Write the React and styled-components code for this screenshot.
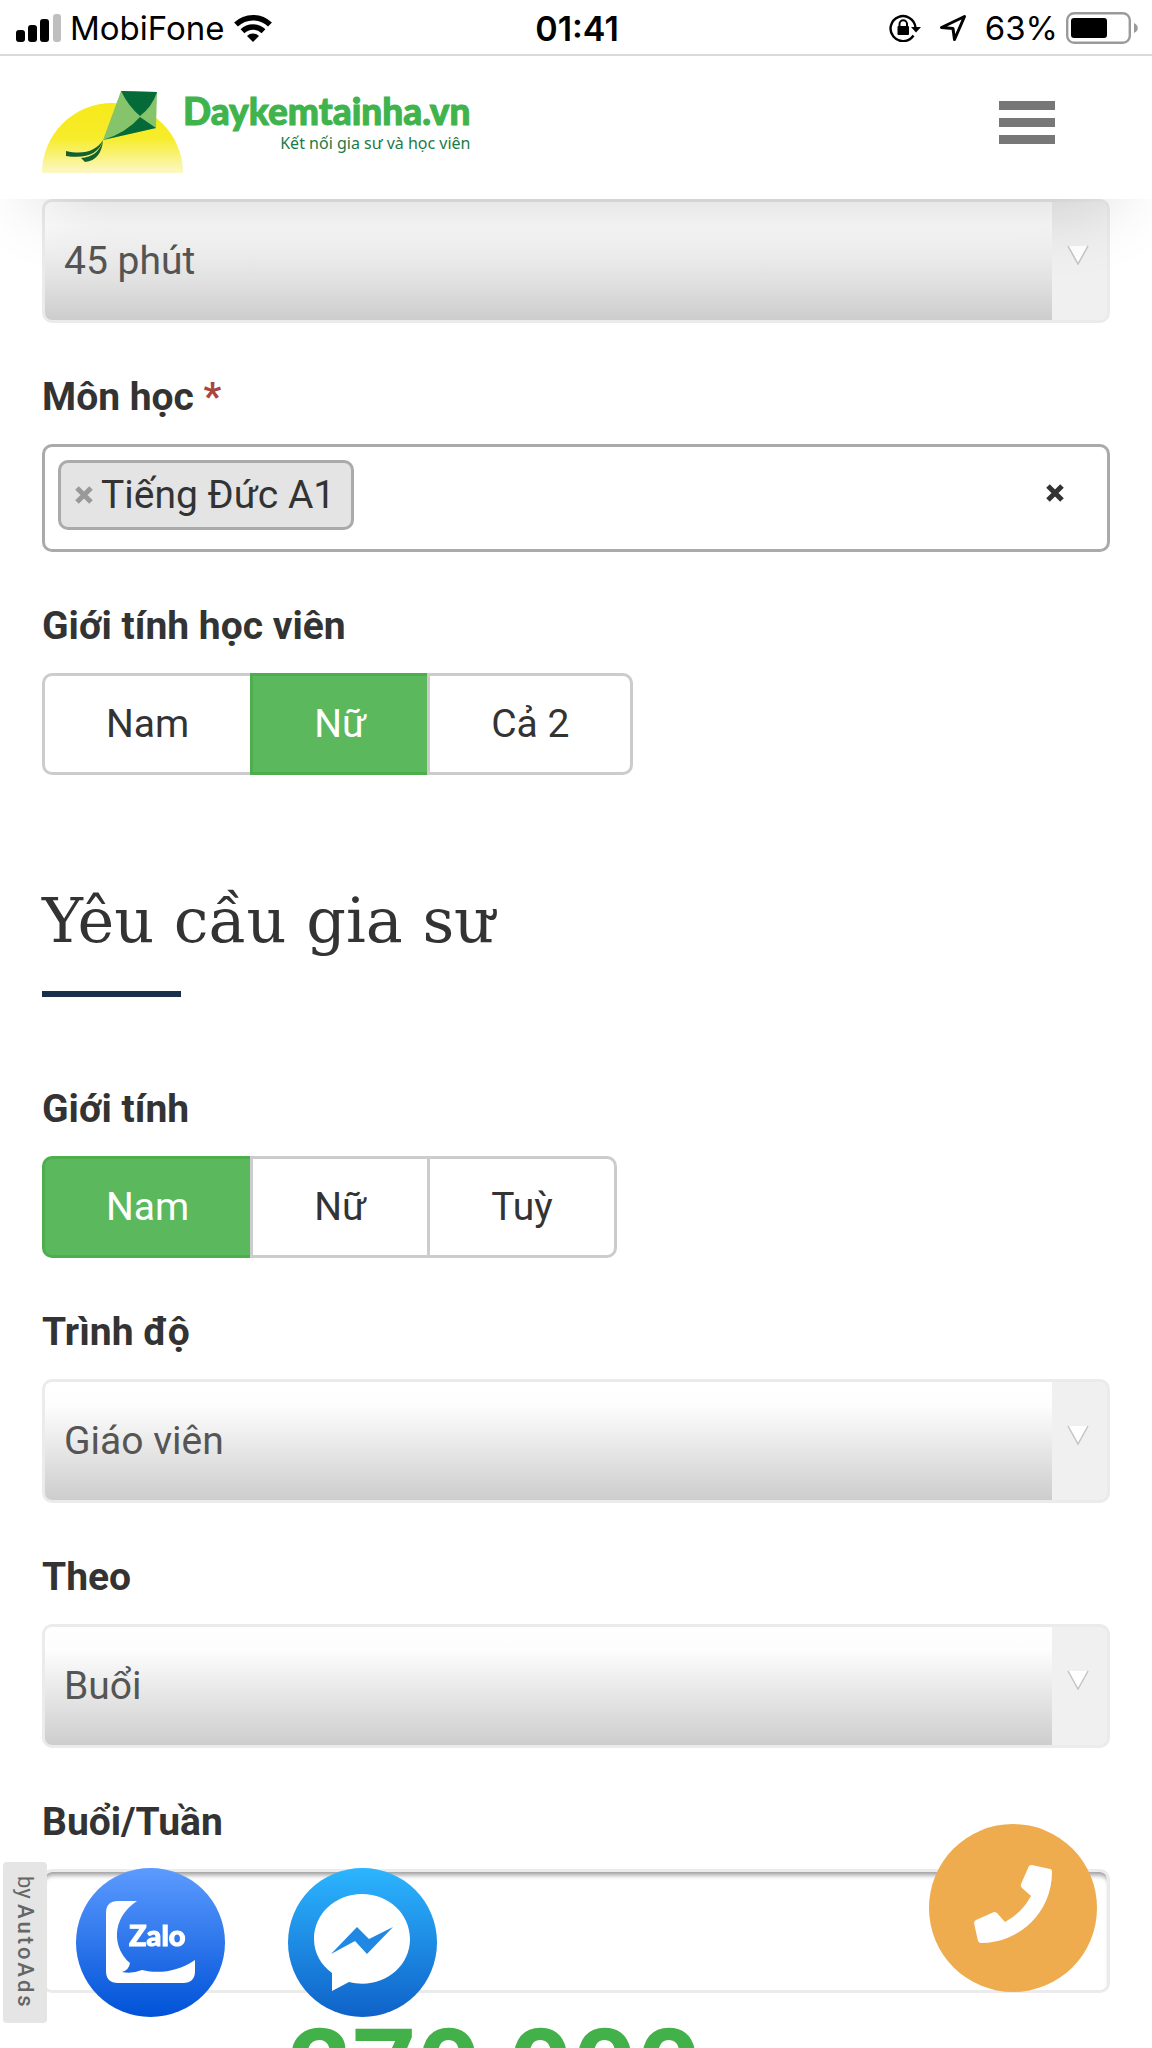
import React, { useState } from 'react';
import styled, { createGlobalStyle, css } from 'styled-components';

const GlobalStyle = createGlobalStyle`
	* {
		box-sizing: border-box;
	}
	body {
		margin: 0;
		background: #fff;
		color: #333;
		font-family: Roboto, 'Liberation Sans', sans-serif;
		font-size: 39px;
	}
`;

const Screen = styled.div`
	display: flex;
	flex-direction: column;
	height: 100vh;
	overflow: hidden;
`;

const Top = styled.div`
	position: relative;
	z-index: 2;
	flex: none;
	background: #fff;
	box-shadow: 0 40px 80px -40px rgba(0, 0, 0, 0.2);
`;

const StatusBar = styled.div`
	display: grid;
	grid-template-columns: 1fr auto 1fr;
	align-items: center;
	height: 56px;
	padding: 2px 14px 0 16px;
	border-bottom: 2px solid #dadada;
	color: #000;
	font-family: Inter, 'Liberation Sans', sans-serif;
	font-size: 33px;
`;

const StatusGroup = styled.div`
	display: flex;
	align-items: center;
	gap: ${(props) => props.$gap}px;
	justify-content: ${(props) => (props.$end ? 'flex-end' : 'flex-start')};
`;

const Clock = styled.div`
	font-size: 34px;
	font-weight: 600;
`;

const Header = styled.header`
	display: flex;
	align-items: center;
	justify-content: space-between;
	height: 143px;
	padding: 0 97px 0 42px;
`;

const Brand = styled.a`
	display: flex;
	margin-top: 8px;
	color: #3fb34c;
	text-decoration: none;
`;

const BrandText = styled.span`
	display: flex;
	flex-direction: column;
	align-items: flex-end;
`;

const BrandName = styled.span`
	font: 900 37px/44px Lato, sans-serif;
	-webkit-text-stroke: 1px currentColor;
`;

const BrandSlogan = styled.span`
	color: #1c7a47;
	font: 400 16px/20px 'Noto Sans', sans-serif;
`;

const MenuButton = styled.button`
	display: flex;
	flex-direction: column;
	gap: 8px;
	width: 56px;
	padding: 0;
	margin-bottom: 10px;
	border: 0;
	background: none;
`;

const MenuBar = styled.span`
	height: 9px;
	background: #777;
`;

const Form = styled.form`
	flex: 1;
	min-height: 0;
	overflow: hidden;
	padding: 0 42px;
`;

const Field = styled.div`
	margin-bottom: 47px;
`;

const labelText = css`
	display: block;
	padding: 0;
	margin: 0 0 20px;
	font-weight: 700;
	line-height: 54px;
`;

const Label = styled.label`
	${labelText}
`;

const Fieldset = styled.fieldset`
	min-width: 0;
	padding: 0;
	margin: 0 0 47px;
	border: 0;
`;

const Legend = styled.legend`
	${labelText}
`;

const Required = styled.span`
	color: #a94442;
`;

const SelectBox = styled.div`
	display: flex;
	position: relative;
	height: 124px;
	border: 3px solid #ebebeb;
	border-radius: 10px;
	overflow: hidden;
	background: #f0f0f0;
`;

const Select = styled.select`
	flex: 1;
	appearance: none;
	margin-right: 55px;
	padding: 0 19px;
	border: 0;
	border-radius: 0;
	background: linear-gradient(#fff, #fdfdfd 20%, #cdcdcd);
	color: #555;
	font: inherit;
`;

const SelectArrow = styled.svg`
	position: absolute;
	top: 43px;
	right: 18px;
	pointer-events: none;
`;

const TagBox = styled.div`
	display: flex;
	align-items: flex-start;
	justify-content: space-between;
	height: 108px;
	padding: 13px;
	border: 3px solid #aaa;
	border-radius: 10px;
`;

const Tag = styled.span`
	display: flex;
	align-items: center;
	height: 70px;
	padding: 0 16px 0 14px;
	border: 3px solid #aaa;
	border-radius: 10px;
	background: #e4e4e4;
`;

const CrossButton = styled.button`
	display: flex;
	padding: ${(props) => props.$pad};
	border: 0;
	background: none;
	color: ${(props) => props.$color};
`;

const ButtonGroup = styled.div`
	display: flex;
`;

const Option = styled.label`
	height: 102px;
	padding: 0 61px;
	margin-left: -3px;
	border: 3px solid #ccc;
	line-height: 96px;
	&:first-child {
		margin-left: 0;
		border-radius: 10px 0 0 10px;
	}
	&:last-child {
		border-radius: 0 10px 10px 0;
	}
	&:has(input:checked) {
		border-color: #4cae4c;
		background: #5cb85c;
		color: #fff;
	}
`;

const Radio = styled.input`
	position: absolute;
	opacity: 0;
	pointer-events: none;
`;

const SectionTitle = styled.h2`
	margin: 108px 0 85px;
	font: 400 62px/76px 'Roboto Slab', 'DejaVu Serif', serif;
	&::after {
		content: '';
		display: block;
		width: 139px;
		height: 6px;
		margin-top: 32px;
		background: #1b2e4b;
	}
`;

const TextInput = styled.input`
	display: block;
	width: 100%;
	height: 124px;
	padding: 0 19px;
	border: 3px solid #ebebeb;
	border-radius: 10px;
	background: #fff;
	box-shadow: inset 0 6px 5px -3px rgba(0, 0, 0, 0.4);
	font: inherit;
`;

const TotalBar = styled.div`
	flex: none;
	height: 40px;
	padding-left: 288px;
	overflow: hidden;
	color: #42b149;
	font-weight: 700;
	font-size: 112px;
	line-height: 124px;
`;

const RoundLink = styled.a`
	display: block;
	height: ${(props) => props.$size}px;
`;

const ChatLinks = styled.div`
	position: fixed;
	z-index: 3;
	left: 76px;
	bottom: 31px;
	display: flex;
	gap: 63px;
`;

const CallLink = styled(RoundLink)`
	position: fixed;
	z-index: 3;
	right: 55px;
	bottom: 56px;
`;

const AdTab = styled.a`
	position: fixed;
	z-index: 3;
	left: 3px;
	bottom: 25px;
	width: 44px;
	height: 161px;
	border-radius: 4px;
	background: #e5e5e5;
	color: #666;
	font-size: 22px;
	line-height: 44px;
	text-align: center;
	text-decoration: none;
	writing-mode: vertical-rl;
`;

const AdName = styled.b`
	font-weight: 500;
	letter-spacing: 3px;
`;

const SignalIcon = () => (
	<svg width="46" height="28" viewBox="0 0 46 28">
		<rect x="0" y="16" width="9" height="12" rx="3" />
		<rect x="12" y="11" width="9" height="17" rx="3" />
		<rect x="24" y="5" width="9" height="23" rx="3" />
		<rect x="37" y="0" width="8" height="28" rx="3" fill="#bfbfbf" />
	</svg>
);

const WifiIcon = () => (
	<svg width="40" height="28" viewBox="0 0 40 28">
		<path d="M3 10.500A24.500 24.500 0 0 1 37 10.500" fill="none" stroke="#000" strokeWidth="5.500" />
		<path d="M9.500 17.200A15 15 0 0 1 30.500 17.200" fill="none" stroke="#000" strokeWidth="5.500" />
		<path d="M14 22A8.500 8.500 0 0 1 26 22L20 28Z" />
	</svg>
);

const LockIcon = () => (
	<svg width="32" height="28" viewBox="0 0 32 28">
		<path d="M24.500 21.500A12.500 12.500 0 1 1 26.500 13.500" fill="none" stroke="#000" strokeWidth="2.400" />
		<path d="M22 13H32L27 18.500Z" />
		<rect x="8.500" y="12" width="11.500" height="9" rx="1" />
		<path d="M10.500 13V10A3.700 3.700 0 0 1 18 10V13" fill="none" stroke="#000" strokeWidth="2" />
	</svg>
);

const LocationIcon = () => (
	<svg width="28" height="28" viewBox="0 0 28 28">
		<path d="M2.500 13.500L25.500 2.500L15.500 25.500L14 14.500Z" fill="none" stroke="#000" strokeWidth="3" strokeLinejoin="round" />
	</svg>
);

const BatteryIcon = () => (
	<svg width="72" height="32" viewBox="0 0 72 32">
		<rect x="1.200" y="1.200" width="62.600" height="29.600" rx="7" fill="none" stroke="#9a9a9a" strokeWidth="2.400" />
		<rect x="5" y="6" width="36" height="20" rx="3" />
		<path d="M68 11C73 13 73 19 68 21Z" fill="#9a9a9a" />
	</svg>
);

const KiteLogo = () => (
	<svg width="141" height="85" viewBox="0 0 141 85">
		<defs>
			<linearGradient id="sun" x1="0" y1="0" x2="0" y2="1">
				<stop offset="0" stopColor="#f6ea1a" />
				<stop offset="0.500" stopColor="#f6ec2a" />
				<stop offset="1" stopColor="#fcf8c8" />
			</linearGradient>
		</defs>
		<path d="M0 84A70.500 70 0 0 1 141 84Z" fill="url(#sun)" />
		<path d="M79 2L115 3L114 39L61 51Z" fill="#86c46c" />
		<path d="M79 2L115 3Q110 18 98 27Q87 18 79 2Z" fill="#046a38" />
		<path d="M98 28L114 39L61 51Q84 44 98 28Z" fill="#046a38" />
		<path d="M61 51C54 62 42 66 24 62V67C44 70 57 65 61 51Z" fill="#14602f" />
		<path d="M61 51C58 63 50 68 39 69L43 73C54 72 60 64 61 51Z" fill="#14602f" />
	</svg>
);

const CrossIcon = () => (
	<svg width="18" height="18" viewBox="0 0 18 18">
		<path d="M2 2L16 16M16 2L2 16" stroke="currentColor" strokeWidth="5" />
	</svg>
);

const ZaloIcon = () => (
	<svg width="149" height="149" viewBox="0 0 149 149">
		<defs>
			<linearGradient id="zalo" x1="0" y1="0" x2="0" y2="1">
				<stop offset="0" stopColor="#5c9bff" />
				<stop offset="1" stopColor="#0052d8" />
			</linearGradient>
		</defs>
		<circle cx="74.500" cy="74.500" r="74.500" fill="url(#zalo)" />
		<path
			d="M61 33H42Q30 33 30 45V103Q30 115 42 115H107Q119 115 119 103V92C101 104 83 106 66 102Q56 106 46 104Q53 102 54 95C37 81 34 51 61 33Z"
			fill="#fff"
		/>
		<text x="53" y="78" fill="#fff" stroke="#fff" strokeWidth="1" fontFamily="Lato, sans-serif" fontWeight="900" fontSize="29">
			Zalo
		</text>
	</svg>
);

const MessengerIcon = () => (
	<svg width="149" height="149" viewBox="0 0 149 149">
		<defs>
			<linearGradient id="messenger" x1="0" y1="0" x2="0" y2="1">
				<stop offset="0" stopColor="#2cb5ff" />
				<stop offset="1" stopColor="#0f62c8" />
			</linearGradient>
		</defs>
		<circle cx="74.500" cy="74.500" r="74.500" fill="url(#messenger)" />
		<path d="M74 26C47 26 26 46 26 71C26 85 33 97 44 105V123L61 114C92 122 122 101 122 71C122 46 101 26 74 26Z" fill="#fff" />
		<path d="M43 86L69 59L81 71L105 59L79 86L67 73Z" fill="#2088e2" />
	</svg>
);

const PhoneIcon = () => (
	<svg width="168" height="168" viewBox="0 0 168 168">
		<circle cx="84" cy="84" r="84" fill="#eeac4f" />
		<path
			d="M103 41L121 45Q123 45 123 48C123 88 91 119 52 119Q50 119 49 117L45 99Q45 97 47 96L65 88Q67 88 68 89L76 98Q93 89 102 72L93 64Q91 62 92 60L100 42Q101 41 103 41Z"
			fill="#fff"
		/>
	</svg>
);

const SelectField = ({ id, label, options }) => (
	<Field>
		{label && <Label htmlFor={id}>{label}</Label>}
		<SelectBox>
			<Select id={id} aria-label={label ? undefined : 'Thời lượng'}>
				{options.map((option) => (
					<option key={option}>{option}</option>
				))}
			</Select>
			<SelectArrow width="22" height="20" viewBox="0 0 22 20">
				<path d="M1 1H21L11 19Z" fill="#fff" />
				<path d="M1 1L11 19L21 1" fill="none" stroke="#c4c4c4" strokeWidth="1.500" />
			</SelectArrow>
		</SelectBox>
	</Field>
);

const RadioField = ({ name, label, options, initial }) => {
	const [value, setValue] = useState(initial);
	return (
		<Fieldset>
			<Legend>{label}</Legend>
			<ButtonGroup>
				{options.map((option) => (
					<Option key={option}>
						<Radio type="radio" name={name} checked={value === option} onChange={() => setValue(option)} />
						{option}
					</Option>
				))}
			</ButtonGroup>
		</Fieldset>
	);
};

const App = () => {
	const [subjects, setSubjects] = useState(['Tiếng Đức A1']);
	return (
		<Screen>
			<GlobalStyle />
			<Top>
				<StatusBar>
					<StatusGroup $gap={8}>
						<SignalIcon />
						MobiFone
						<WifiIcon />
					</StatusGroup>
					<Clock>01:41</Clock>
					<StatusGroup $gap={18} $end>
						<LockIcon />
						<LocationIcon />
						<StatusGroup $gap={8}>
							63%
							<BatteryIcon />
						</StatusGroup>
					</StatusGroup>
				</StatusBar>
				<Header>
					<Brand href="#">
						<KiteLogo />
						<BrandText>
							<BrandName>Daykemtainha.vn</BrandName>
							<BrandSlogan>Kết nối gia sư và học viên</BrandSlogan>
						</BrandText>
					</Brand>
					<MenuButton type="button" aria-label="Menu">
						<MenuBar />
						<MenuBar />
						<MenuBar />
					</MenuButton>
				</Header>
			</Top>
			<Form onSubmit={(e) => e.preventDefault()}>
				<SelectField id="duration" options={['45 phút', '60 phút', '90 phút']} />
				<Field>
					<Label as="div">
						Môn học <Required>*</Required>
					</Label>
					<TagBox>
						<div>
							{subjects.map((subject) => (
								<Tag key={subject}>
									<CrossButton
										type="button"
										aria-label={subject}
										$color="#999"
										$pad="0 8px 0 0"
										onClick={() => setSubjects(subjects.filter((item) => item !== subject))}
									>
										<CrossIcon />
									</CrossButton>
									{subject}
								</Tag>
							))}
						</div>
						<CrossButton type="button" aria-label="Xoá" $color="#333" $pad="24px 30px" onClick={() => setSubjects([])}>
							<CrossIcon />
						</CrossButton>
					</TagBox>
				</Field>
				<RadioField name="student" label="Giới tính học viên" options={['Nam', 'Nữ', 'Cả 2']} initial="Nữ" />
				<SectionTitle>Yêu cầu gia sư</SectionTitle>
				<RadioField name="tutor" label="Giới tính" options={['Nam', 'Nữ', 'Tuỳ']} initial="Nam" />
				<SelectField id="level" label="Trình độ" options={['Giáo viên', 'Sinh viên']} />
				<SelectField id="unit" label="Theo" options={['Buổi', 'Tháng']} />
				<Field>
					<Label htmlFor="sessions">Buổi/Tuần</Label>
					<TextInput id="sessions" type="text" />
				</Field>
			</Form>
			<TotalBar>270,000</TotalBar>
			<ChatLinks>
				<RoundLink href="#" aria-label="Zalo" $size={149}>
					<ZaloIcon />
				</RoundLink>
				<RoundLink href="#" aria-label="Messenger" $size={149}>
					<MessengerIcon />
				</RoundLink>
			</ChatLinks>
			<CallLink href="#" aria-label="Gọi" $size={168}>
				<PhoneIcon />
			</CallLink>
			<AdTab href="#">
				by <AdName>AutoAds</AdName>
			</AdTab>
		</Screen>
	);
};

export default App;
